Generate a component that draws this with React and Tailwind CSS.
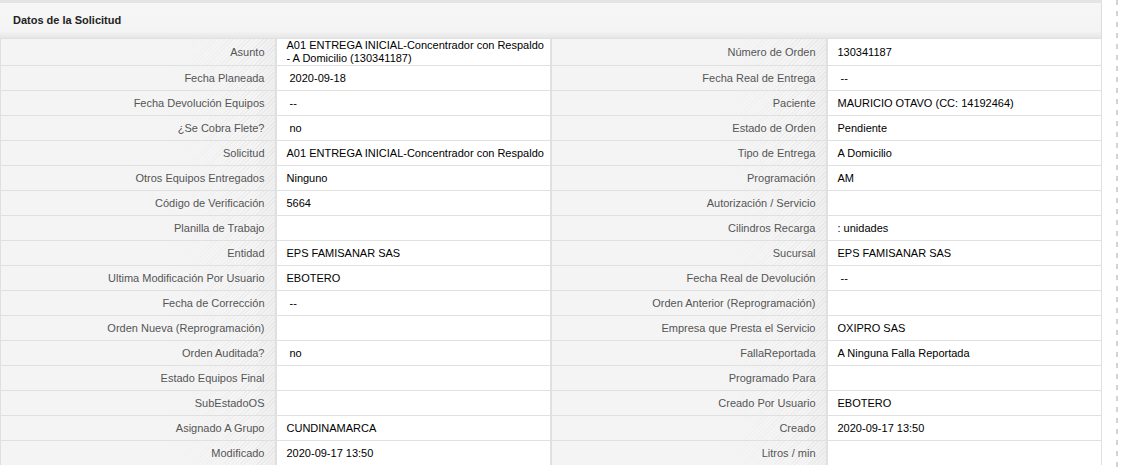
import React from 'react';

const rows = [
  ['Asunto', ['A01 ENTREGA INICIAL-Concentrador con Respaldo', '- A Domicilio (130341187)'], false, 'Número de Orden', '130341187', false],
  ['Fecha Planeada', '2020-09-18', true, 'Fecha Real de Entrega', '--', true],
  ['Fecha Devolución Equipos', '--', true, 'Paciente', 'MAURICIO OTAVO (CC: 14192464)', false],
  ['¿Se Cobra Flete?', 'no', true, 'Estado de Orden', 'Pendiente', false],
  ['Solicitud', 'A01 ENTREGA INICIAL-Concentrador con Respaldo', false, 'Tipo de Entrega', 'A Domicilio', false],
  ['Otros Equipos Entregados', 'Ninguno', false, 'Programación', 'AM', false],
  ['Código de Verificación', '5664', false, 'Autorización / Servicio', '', false],
  ['Planilla de Trabajo', '', false, 'Cilindros Recarga', ': unidades', false],
  ['Entidad', 'EPS FAMISANAR SAS', false, 'Sucursal', 'EPS FAMISANAR SAS', false],
  ['Ultima Modificación Por Usuario', 'EBOTERO', false, 'Fecha Real de Devolución', '--', true],
  ['Fecha de Corrección', '--', true, 'Orden Anterior (Reprogramación)', '', false],
  ['Orden Nueva (Reprogramación)', '', false, 'Empresa que Presta el Servicio', 'OXIPRO SAS', false],
  ['Orden Auditada?', 'no', true, 'FallaReportada', 'A Ninguna Falla Reportada', false],
  ['Estado Equipos Final', '', false, 'Programado Para', '', false],
  ['SubEstadoOS', '', false, 'Creado Por Usuario', 'EBOTERO', false],
  ['Asignado A Grupo', 'CUNDINAMARCA', false, 'Creado', '2020-09-17 13:50', false],
  ['Modificado', '2020-09-17 13:50', false, 'Litros / min', '', false],
];

function Label({ text, first }) {
  return (
    <div
      className={
        'flex items-center justify-end pr-[10px] whitespace-nowrap text-[11px] text-[#555] bg-[#f4f4f4] bg-[linear-gradient(to_right,rgba(244,244,244,1)_60%,rgba(244,244,244,0)_92%,rgba(0,0,0,0.025)),repeating-linear-gradient(135deg,#f5f5f5_0px,#f5f5f5_2px,#ececec_2px,#ececec_3px)] ' +
        (first ? 'h-[26px]' : 'h-[24px]')
      }
    >
      {text}
    </div>
  );
}

function Value({ text, indent, first }) {
  return (
    <div
      className={
        'flex flex-col justify-center bg-white text-[11px] text-black leading-[13px] whitespace-nowrap overflow-hidden ' +
        (indent ? 'pl-[13px] ' : 'pl-[10px] ') +
        (first ? 'h-[26px]' : 'h-[24px]')
      }
    >
      {Array.isArray(text) ? text.map((t) => <span key={t}>{t}</span>) : <span>{text}</span>}
    </div>
  );
}

export default function App() {
  return (
    <div className="flex w-[1129px] h-[467px] overflow-hidden bg-white font-['Liberation_Sans',Arial,sans-serif]">
      <div className="w-[1102px] flex flex-col">
        <div className="h-[3px] bg-[#e4e4e4]" />
        <div className="h-[35px] flex items-center pl-[13px] bg-[linear-gradient(to_bottom,#f6f6f6_0%,#f4f4f4_80%,#e6e6e6_100%)] border-r border-[#dcdcdc]">
          <span className="text-[11px] font-bold text-[#222]">Datos de la Solicitud</span>
        </div>
        <div className="grid grid-cols-4 gap-x-[2px] gap-y-[1px] bg-[#e0e0e0] p-[1px] pb-0">
          {rows.map((r, i) => (
            <React.Fragment key={i}>
              <Label text={r[0]} first={i === 0} />
              <Value text={r[1]} indent={r[2]} first={i === 0} />
              <Label text={r[3]} first={i === 0} />
              <Value text={r[4]} indent={r[5]} first={i === 0} />
            </React.Fragment>
          ))}
        </div>
      </div>
      <div className="ml-[14px] w-[2px] h-full bg-[repeating-linear-gradient(to_bottom,#d4d4d4_0px,#d4d4d4_5px,transparent_5px,transparent_11px)]" />
    </div>
  );
}
